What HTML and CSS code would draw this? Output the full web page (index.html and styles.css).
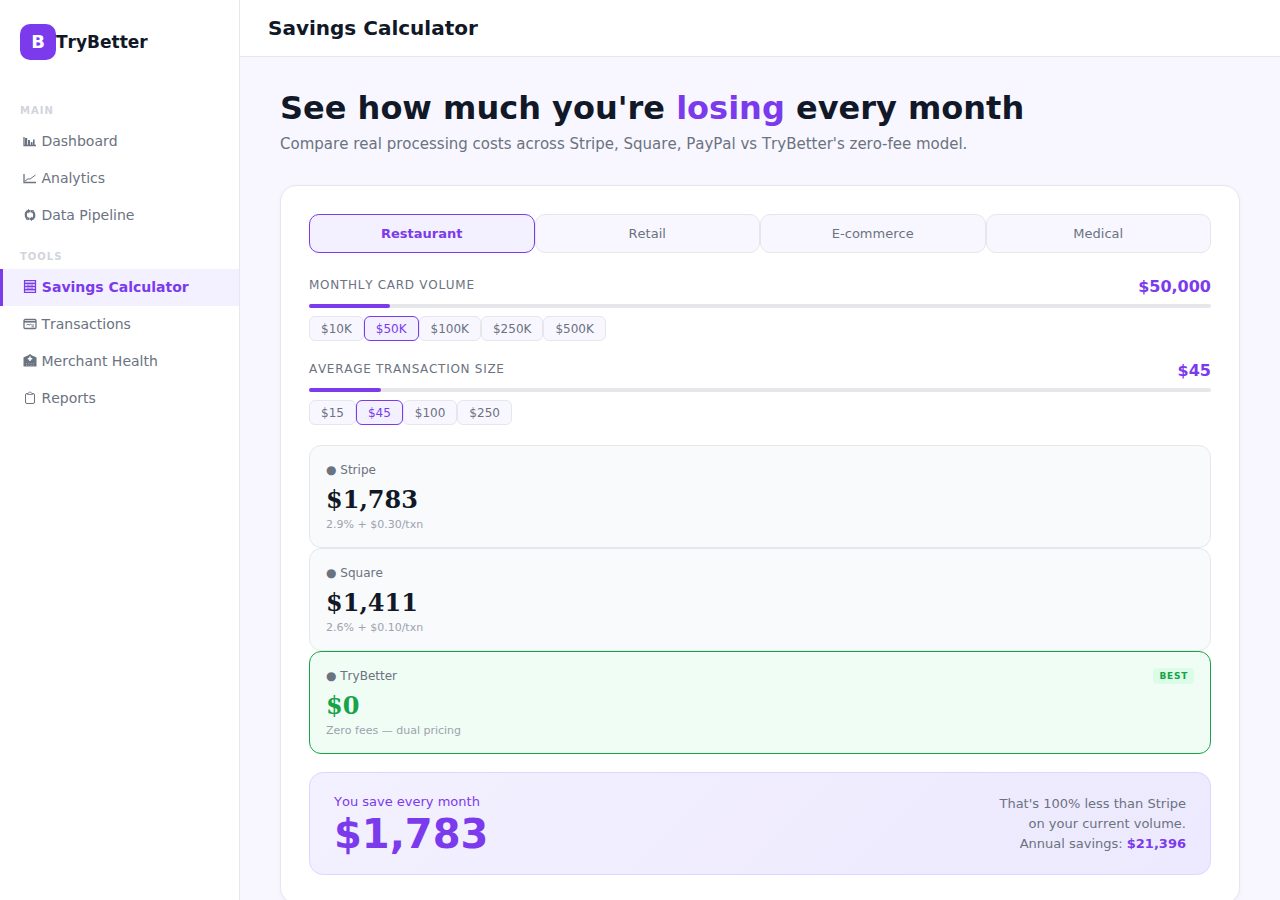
FILE: index.html
```html
<!DOCTYPE html>
<html lang="en">
<head>
<meta charset="utf-8">
<meta name="viewport" content="width=device-width, initial-scale=1">
<title>Savings Calculator</title>
<link rel="stylesheet" href="styles.css">
</head>
<body>
<div class="app">
  <aside class="sidebar">
    <div class="brand"><span class="brand-mark">B</span><span class="brand-name">TryBetter</span></div>
    <nav class="nav">
      <div class="nav-label">MAIN</div>
      <a class="nav-item" href="#dashboard"><svg class="icon" viewBox="0 0 14 14" aria-hidden="true"><path d="M1 3v8.500h12" stroke="currentColor" stroke-width="1.300" fill="none"/><path d="M2 4h2.200v7H2zM5 6h2v5H5zM7.800 8h1.700v3H7.800zM10 5.500h1.600V11H10z" fill="currentColor"/></svg> Dashboard</a>
      <a class="nav-item" href="#analytics"><svg class="icon" viewBox="0 0 14 14" aria-hidden="true"><path d="M1 3v8.500h12" stroke="currentColor" stroke-width="1.300" fill="none"/><path d="M2 10l3-2.200 2 .3L12.500 4" stroke="currentColor" fill="none"/></svg> Analytics</a>
      <a class="nav-item" href="#pipeline"><svg class="icon" viewBox="0 0 14 14" aria-hidden="true"><path d="M6 2.800C3 3 2.300 6 3 8.500c.3 1 .8 1.500 1.500 2M8 11.200c3-.2 3.700-3.200 3-5.700-.3-1-.8-1.500-1.500-2" stroke="currentColor" stroke-width="2.200" fill="none"/><path d="M5.200.8l2.500 2.200-2.300 2.500zM8.800 8.500v4.700l-2.500-2.200zM3 11.800l3.300.2V8.800zM11 2.200L7.700 2v3.200z" fill="currentColor"/></svg> Data Pipeline</a>
      <div class="nav-label">TOOLS</div>
      <a class="nav-item active" href="#calculator" aria-current="page"><svg class="icon" viewBox="0 0 14 14" aria-hidden="true"><path d="M1.500 0v13M12.500 0v13" stroke="currentColor" stroke-width="1.200"/><path d="M1 .5h12M1 12.500h12" stroke="currentColor" stroke-width="1.200"/><path d="M2 3.500h10M2 6.500h10M2 9.500h10" stroke="currentColor" stroke-width="1.400"/><path d="M2 2h10M2 11h10" stroke="currentColor" opacity=".45"/><path d="M4 4.500h2.500v1.500H4zM7.500 4.500H10v1.500H7.500zM4 7.500h2.500v1.500H4zM7.500 7.500H10v1.500H7.500z" fill="currentColor" opacity=".5"/></svg> Savings Calculator</a>
      <a class="nav-item" href="#transactions"><svg class="icon" viewBox="0 0 14 14" aria-hidden="true"><rect x="1" y="2.500" width="12" height="9" rx="1.200" stroke="currentColor" stroke-width="1.300" fill="none"/><path d="M1 4.800h12" stroke="currentColor" stroke-width="1.600"/><path d="M3.500 8l1.500-1 1 1.200L7.500 7l1 1H11M8.500 9.800H11" stroke="currentColor" stroke-width=".9" fill="none"/></svg> Transactions</a>
      <a class="nav-item" href="#health"><svg class="icon" viewBox="0 0 14 14" aria-hidden="true"><path fill="currentColor" d="M.5 12.500V3.500l2-1L5 1.500 7 0l2 1.500 2.500 1 2 1v9z"/><path d="M7 2.500v4.500M4.800 4.700h4.400" stroke="#fff" stroke-width="1.500"/><path d="M3 9.500h8M3 11.300h8" stroke="#fff" stroke-width=".7" stroke-dasharray="1 1.300" opacity=".5"/></svg> Merchant Health</a>
      <a class="nav-item" href="#reports"><svg class="icon" viewBox="0 0 14 14" aria-hidden="true"><rect x="2.500" y="2.500" width="9" height="10" rx="1.500" stroke="currentColor" fill="none"/><path d="M4.500 3.500c0-1 .8-1.500 1.300-1.500.2-1.500 2.200-1.500 2.400 0 .5 0 1.300.5 1.300 1.500z" stroke="currentColor" stroke-width=".8" fill="#fff"/></svg> Reports</a>
    </nav>
  </aside>
  <div class="page">
    <header class="topbar"><h1 class="topbar-title">Savings Calculator</h1></header>
    <main class="content">
      <h2 class="headline">See how much you're <em>losing</em> every month</h2>
      <p class="subline">Compare real processing costs across Stripe, Square, PayPal vs TryBetter's zero-fee model.</p>
      <section class="card">
        <div class="tabs">
          <button class="tab active" type="button">Restaurant</button>
          <button class="tab" type="button">Retail</button>
          <button class="tab" type="button">E-commerce</button>
          <button class="tab" type="button">Medical</button>
        </div>
        <div class="field">
          <div class="field-head"><label for="volume">MONTHLY CARD VOLUME</label><output for="volume">$50,000</output></div>
          <div class="slider"><span class="slider-fill" style="width: 9%"></span><input id="volume" type="range" min="5000" max="500000" value="50000"></div>
          <div class="presets">
            <button class="preset" type="button">$10K</button>
            <button class="preset active" type="button">$50K</button>
            <button class="preset" type="button">$100K</button>
            <button class="preset" type="button">$250K</button>
            <button class="preset" type="button">$500K</button>
          </div>
        </div>
        <div class="field">
          <div class="field-head"><label for="size">AVERAGE TRANSACTION SIZE</label><output for="size">$45</output></div>
          <div class="slider"><span class="slider-fill" style="width: 8%"></span><input id="size" type="range" min="5" max="500" value="45"></div>
          <div class="presets">
            <button class="preset" type="button">$15</button>
            <button class="preset active" type="button">$45</button>
            <button class="preset" type="button">$100</button>
            <button class="preset" type="button">$250</button>
          </div>
        </div>
        <div class="providers">
          <article class="provider">
            <div class="provider-name">● Stripe</div>
            <div class="provider-cost">$1,783</div>
            <div class="provider-rate">2.9% + $0.30/txn</div>
          </article>
          <article class="provider">
            <div class="provider-name">● Square</div>
            <div class="provider-cost">$1,411</div>
            <div class="provider-rate">2.6% + $0.10/txn</div>
          </article>
          <article class="provider best">
            <div class="provider-name">● TryBetter <span class="badge">BEST</span></div>
            <div class="provider-cost">$0</div>
            <div class="provider-rate">Zero fees — dual pricing</div>
          </article>
        </div>
        <div class="savings">
          <div>
            <div class="savings-label">You save every month</div>
            <div class="savings-amount">$1,783</div>
          </div>
          <p class="savings-note">That's 100% less than Stripe<br>on your current volume.<br>Annual savings: <strong>$21,396</strong></p>
        </div>
      </section>
    </main>
  </div>
</div>
</body>
</html>
```
FILE: styles.css
```css
* { box-sizing: border-box; }
body {
  margin: 0;
  background: #f8f7ff;
  color: #111827;
  font-family: "DejaVu Sans", sans-serif;
  font-size: 14px;
  font-kerning: none;
}
button { font-family: inherit; font-kerning: inherit; cursor: pointer; }
h1, h2, p { margin: 0; }

.app { display: flex; min-height: 100vh; }

.sidebar {
  flex: 0 0 240px;
  background: #fff;
  border-right: 1px solid #e5e7eb;
}
.brand { display: flex; align-items: center; padding: 24px 20px; }
.brand-mark {
  width: 36px;
  height: 36px;
  border-radius: 10px;
  background: #7c3aed;
  color: #fff;
  font-size: 18px;
  font-weight: 700;
  line-height: 35px;
  text-align: center;
}
.brand-name { font-size: 17px; font-weight: 700; }
.nav { padding-top: 4px; }
.nav-label {
  padding: 17px 20px 6px;
  color: #d1d5db;
  font-size: 10px;
  font-weight: 700;
  letter-spacing: 1px;
  line-height: 12px;
}
.nav-item {
  display: block;
  padding: 10px 20px;
  border-left: 3px solid transparent;
  color: #6b7280;
  line-height: 17px;
  text-decoration: none;
}
.nav-item.active {
  border-left-color: #7c3aed;
  background: #f3f0ff;
  color: #7c3aed;
  font-weight: 600;
}
.icon { width: 14px; height: 14px; vertical-align: -2px; }

.page { flex: 1; min-width: 0; }
.topbar {
  padding: 16px 28px;
  border-bottom: 1px solid #e5e7eb;
  background: #fff;
}
.topbar-title { font-size: 20px; font-weight: 700; line-height: 24px; }
.content { padding: 32px 40px; }
.headline { font-size: 32px; font-weight: 800; line-height: 38px; }
.headline em { color: #7c3aed; font-style: normal; }
.subline { margin-top: 8px; color: #6b7280; font-size: 15px; line-height: 18px; }

.card {
  margin-top: 32px;
  padding: 28px;
  border: 1px solid #e5e7eb;
  border-radius: 16px;
  background: #fff;
  box-shadow: 0 1px 4px rgba(124, 58, 237, 0.06);
}
.tabs { display: flex; }
.tab {
  flex: 1;
  padding: 11px 12px;
  border: 1px solid #e5e7eb;
  border-radius: 10px;
  background: #f8f7ff;
  color: #6b7280;
  font-size: 13px;
  line-height: 15px;
}
.tab.active, .preset.active {
  border-color: #7c3aed;
  background: #f3f0ff;
  color: #7c3aed;
}
.tab.active { font-weight: 600; }

.field { margin-top: 24px; }
.field + .field { margin-top: 20px; }
.field-head {
  display: flex;
  justify-content: space-between;
  color: #6b7280;
  font-size: 12px;
  line-height: 16px;
  letter-spacing: 0.06em;
}
.field-head output {
  color: #7c3aed;
  font-size: 16px;
  font-weight: 700;
  line-height: 19px;
  letter-spacing: 0;
}
.slider {
  display: grid;
  height: 4px;
  margin: 8px 0;
  border-radius: 2px;
  background: #e5e7eb;
}
.slider > * { grid-area: 1 / 1; }
.slider-fill { border-radius: 2px; background: #7c3aed; }
.slider input { width: 100%; height: 4px; margin: 0; opacity: 0; cursor: pointer; }
.presets { display: flex; flex-wrap: wrap; }
.preset {
  padding: 5px 11px 4px;
  border: 1px solid #e5e7eb;
  border-radius: 6px;
  background: #f8f7ff;
  color: #6b7280;
  font-size: 12px;
  line-height: 14px;
}

.providers { margin-top: 20px; }
.provider {
  padding: 16px;
  border: 1px solid #e5e7eb;
  border-radius: 12px;
  background: #f9fafb;
}
.provider-name {
  display: flex;
  align-items: center;
  justify-content: space-between;
  color: #6b7280;
  font-size: 12px;
  line-height: 16px;
}
.provider-cost {
  margin-top: 7px;
  font-family: "DejaVu Serif", serif;
  font-size: 24px;
  font-weight: 700;
  line-height: 30px;
}
.provider-rate { margin-top: 3px; color: #9ca3af; font-size: 11px; line-height: 13px; }
.provider.best { border-color: #16a34a; background: #f0fdf4; }
.provider.best .provider-cost { color: #16a34a; }
.badge {
  padding: 2px 6px;
  border-radius: 4px;
  background: #dcfce7;
  color: #16a34a;
  font-size: 9px;
  font-weight: 700;
  line-height: 12px;
  letter-spacing: 0.08em;
}

.savings {
  display: flex;
  align-items: center;
  justify-content: space-between;
  margin-top: 18px;
  padding: 18px 24px;
  border: 1px solid #ddd6fe;
  border-radius: 14px;
  background: linear-gradient(135deg, #f3f0ff, #ede9fe);
}
.savings-label { color: #7c3aed; font-size: 13px; line-height: 22px; }
.savings-amount { color: #7c3aed; font-size: 40px; font-weight: 800; line-height: 43px; }
.savings-note { color: #6b7280; font-size: 13px; line-height: 20px; text-align: right; }
.savings-note strong { color: #7c3aed; }
```
